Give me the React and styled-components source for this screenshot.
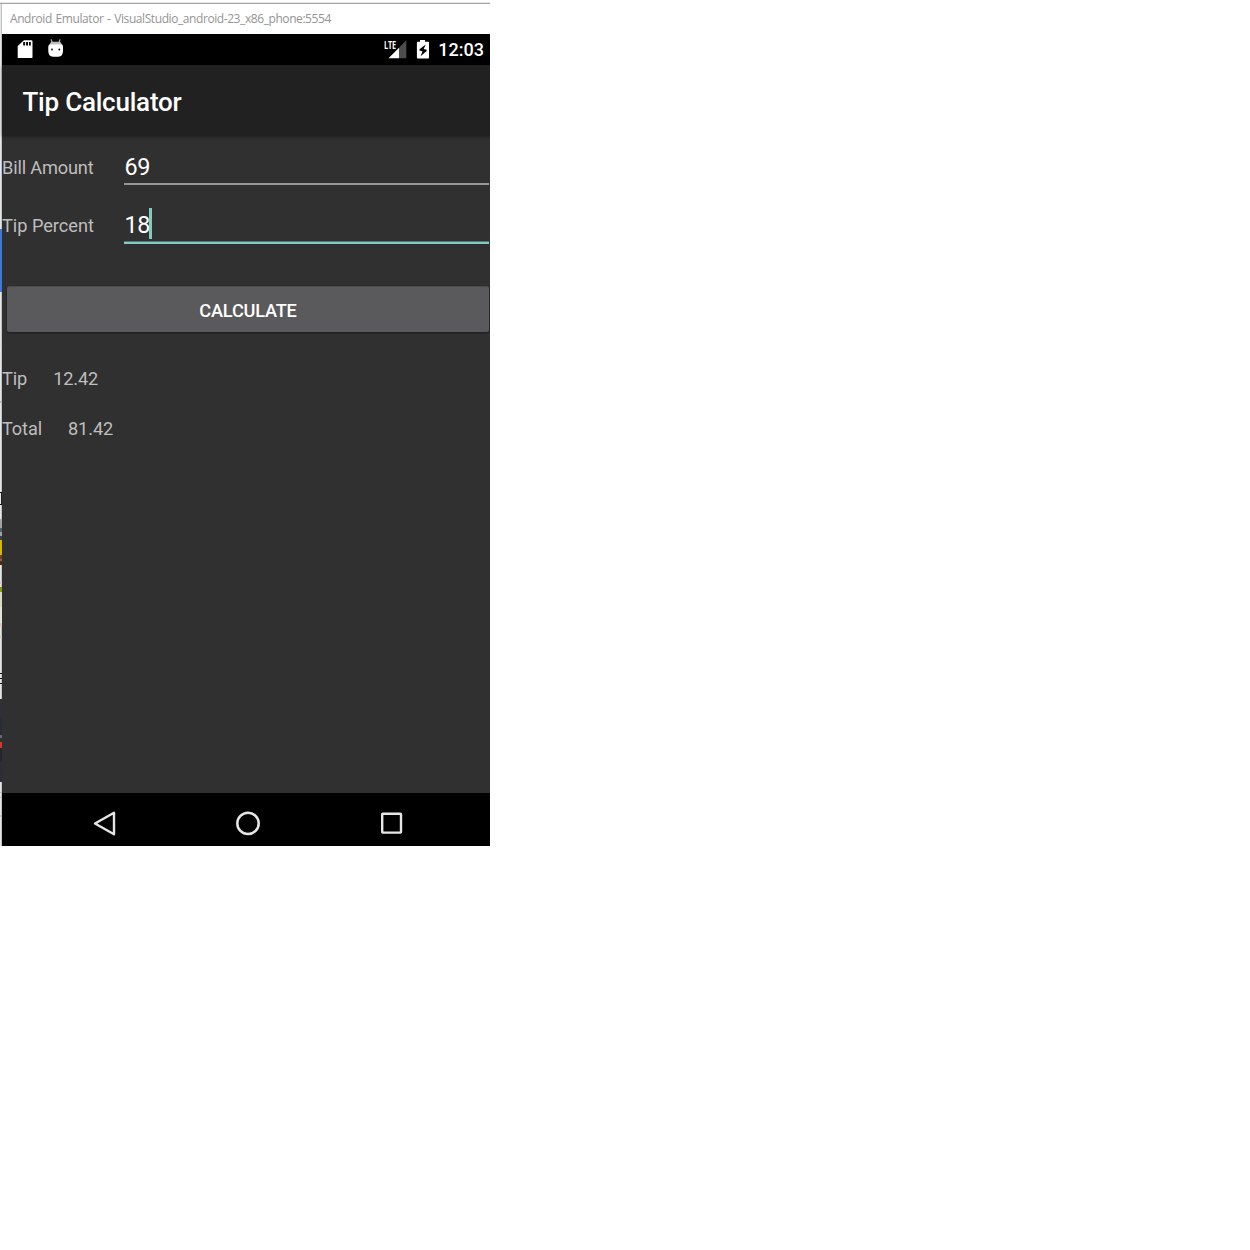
import React from "react";
import styled, { createGlobalStyle } from "styled-components";

const GlobalStyle = createGlobalStyle`
  * { box-sizing: border-box; }
  body { margin: 0; background: #fff; font-family: Roboto, sans-serif; }
`;

const Desktop = styled.div`
  display: flex;
  flex-direction: column;
  width: 490px;
  height: 846px;
  overflow: hidden;
`;

const DesktopTop = styled.div`
  flex: none;
  height: 4px;
  background: linear-gradient(#fff 0 2px, #e4e4e4 2px 3px, #a5a5a5 3px 4px);
`;

const Columns = styled.div`
  display: flex;
  flex: 1;
`;

const DesktopEdge = styled.div`
  display: flex;
  flex-direction: column;
  flex: none;
  width: 2px;
  border-right: 1px solid rgba(160, 160, 160, 0.55);
  background: #e6e8e7;
`;

const EdgeBand = styled.div`
  flex: none;
  width: 2px;
  height: ${(p) => p.$size}px;
  background: ${(p) => p.$color || "transparent"};
`;

const Emulator = styled.div`
  display: flex;
  flex-direction: column;
  width: 488px;
`;

const TitleBar = styled.div`
  display: flex;
  align-items: center;
  height: 30px;
  padding-left: 8px;
  background: #fff;
  color: #949494;
  font: 12px/30px "Open Sans", "Noto Sans", sans-serif;
  letter-spacing: -0.42px;
  word-spacing: 1px;
  white-space: nowrap;
`;

const StatusBar = styled.div`
  display: flex;
  justify-content: space-between;
  height: 31px;
  padding: 0 6px 0 14px;
  background: #000;
`;

const StatusGroup = styled.div`
  display: flex;
  align-items: flex-start;
`;

const Clock = styled.span`
  margin-left: 8px;
  color: #fff;
  font-size: 18px;
  font-weight: 500;
  line-height: 32px;
`;

const AppBar = styled.header`
  display: flex;
  position: relative;
  height: 71px;
  padding: 2px 0 0 20.5px;
  background: #212121;
  box-shadow: 0 1px 3px rgba(0, 0, 0, 0.35);
`;

const AppTitle = styled.h1`
  margin: 0;
  color: #fff;
  font-size: 26px;
  font-weight: 500;
  line-height: 71px;
  letter-spacing: -0.22px;
`;

const Content = styled.main`
  display: flex;
  flex-direction: column;
  height: 657px;
  background: #303030;
  color: #bebebe;
  font-size: 18.2px;
  letter-spacing: -0.08px;
`;

const FieldRow = styled.label`
  display: flex;
  height: ${(p) => p.$height}px;
  padding-top: ${(p) => p.$top}px;
`;

const FieldLabel = styled.span`
  width: 122px;
  line-height: 38px;
  letter-spacing: ${(p) => p.$tracking}px;
`;

const Field = styled.span`
  display: flex;
  align-items: flex-start;
  width: 365px;
  height: ${(p) => (p.$focused ? 37 : 36)}px;
  border-bottom: 2px solid ${(p) => (p.$focused ? "#80cbc4" : "#989698")};
  box-shadow: ${(p) => (p.$focused ? "inset 0 -1px #557370" : "none")};
  color: #fff;
  font-size: 23.4px;
  line-height: 37px;
  letter-spacing: -0.2px;
  text-indent: 0.4px;
`;

const Caret = styled.span`
  width: 3px;
  height: 31px;
  margin: 1px 0 0 -1.3px;
  background: #80cbc4;
`;

const CalculateButton = styled.button`
  width: 482px;
  height: 46px;
  margin: 32px 0 0 5px;
  padding: 3px 0 0;
  border: 0;
  border-top: 1px solid #4a494b;
  border-radius: 2px;
  background: #5a595b;
  box-shadow: 0 1px 2px rgba(0, 0, 0, 0.45);
  color: #fff;
  font: 500 18.2px/42px Roboto, sans-serif;
  letter-spacing: -0.22px;
`;

const ResultRow = styled.div`
  display: flex;
  gap: 26px;
  height: 50px;
  line-height: 50px;
  letter-spacing: -0.12px;
`;

const Results = styled.section`
  padding-top: 22px;
`;

const NavBar = styled.nav`
  display: flex;
  justify-content: space-between;
  height: 53px;
  padding: 14px 82px 0 87px;
  background: #000;
`;

const Icon = styled.svg`
  display: block;
  flex: none;
  margin-left: ${(p) => p.$shift || 0}px;
`;

const edge = [
  [225, null], [63, "#3d78dc"], [53, null], [1, "#d0d0d0"], [55, null], [2, "#b5b5b5"],
  [89, null], [1, "#111"], [11, "glyph"], [1, "#111"], [14, null], [2, "#b5a398"],
  [7, "#a0a4a8"], [4, "#536370"], [4, "#a1a3a3"], [4, "#36424b"], [15, "#d9b600"],
  [4, "#704321"], [2, "#9a622e"], [4, "#4d2b19"], [16, null], [3, "#e3c4d0"],
  [3, null], [5, "#829b13"], [15, "#d7dacd"], [16, "#e1e3dc"], [4, "#e3c9bc"],
  [8, null], [3, "#d1d1c9"], [35, null], [1, "#111"], [4, null], [1, "#111"],
  [4, null], [1, "#111"], [15, null], [18, "#302f36"], [18, "#292b35"],
  [3, "#696970"], [4, "#303038"], [6, "#d9342f"], [14, "#25262a"], [20, "#2e2d35"],
  [10, null], [1, "#bdbdbd"], [4, null], [1, "#bdbdbd"], [17, null], [2, "#c2c2c2"],
].map(([size, color]) => [
  size,
  color === "glyph" ? "linear-gradient(90deg, #e6e8e7 50%, #222 50%)" : color,
]);

const fields = [
  { label: "Bill Amount", value: "69", height: 59, top: 13, tracking: -0.17 },
  { label: "Tip Percent", value: "18", height: 59, top: 12, tracking: -0.03, focused: true },
];

const results = [
  { label: "Tip", value: "12.42" },
  { label: "Total", value: "81.42" },
];

const SdCard = () => (
  <Icon width="18" height="24" viewBox="0 0 18 24">
    <path d="M8 6.3h7.2a1.3 1.3 0 0 1 1.3 1.3v15.5a1.3 1.3 0 0 1-1.3 1.3H3a1.3 1.3 0 0 1-1.3-1.3V12z" fill="#fff" />
    <path d="M7.2 8h1.9v3.5H7.2zM10.1 8H12v3.5h-1.9zM13 8h1.8v3.5H13z" fill="#000" />
  </Icon>
);

const Robot = () => (
  <Icon width="18" height="24" viewBox="0 0 18 24" $shift={13}>
    <path d="M4.2 5.3l1 3.6M13 5.3l-1 3.6" stroke="#aaa" strokeWidth="1.3" />
    <path d="M4.2 7.8h9l2 3H2.2z" fill="#bcbcbc" />
    <path d="M1.3 12.4Q1.5 10.2 3.5 10.2h10.4q2 0 2.1 2.2v4.4q0 5.9-4.6 5.9H6q-4.7 0-4.7-5.9z" fill="#fff" />
    <circle cx="5" cy="15.5" r=".9" fill="#000" />
    <circle cx="12.3" cy="15.5" r=".9" fill="#000" />
  </Icon>
);

const LteLabel = styled.span`
  width: 14px;
  height: 12px;
  margin: 5px -3px 0 0;
  color: #fff;
  font: bold 10.5px/12px "Open Sans", sans-serif;
  letter-spacing: -0.2px;
  transform: scaleX(0.69);
  transform-origin: left;
`;

const Signal = () => (
  <Icon width="19" height="25" viewBox="0 0 19 25" $shift={-7.5}>
    <path d="M11 13.8L18.3 6.3v18H11z" fill="#4d4d4d" />
    <path d="M0.5 24.3L11 13.8v10.5z" fill="#fff" />
  </Icon>
);

const Battery = () => (
  <Icon width="14" height="26" viewBox="0 0 14 26" $shift={9.5}>
    <path d="M4 6h5v1.7h3.2q.8 0 .8.9v15q0 .9-.9.9H1.8q-.9 0-.9-.9v-15q0-.9.9-.9H4z" fill="#fff" />
    <path d="M9.7 10.4L3.5 15.2v1.3l3 .9-2 4.9 6.2-5.4v-1.2l-3-.7z" fill="#000" />
  </Icon>
);

export default function App() {
  return (
    <>
      <GlobalStyle />
      <Desktop>
        <DesktopTop />
        <Columns>
          <DesktopEdge>
            {edge.map(([size, color], i) => (
              <EdgeBand key={i} $size={size} $color={color} />
            ))}
          </DesktopEdge>
          <Emulator>
            <TitleBar>Android Emulator - VisualStudio_android-23_x86_phone:5554</TitleBar>
            <StatusBar>
              <StatusGroup>
                <SdCard />
                <Robot />
              </StatusGroup>
              <StatusGroup>
                <LteLabel>LTE</LteLabel>
                <Signal />
                <Battery />
                <Clock>12:03</Clock>
              </StatusGroup>
            </StatusBar>
            <AppBar>
              <AppTitle>Tip Calculator</AppTitle>
            </AppBar>
            <Content>
              {fields.map((f) => (
                <FieldRow key={f.label} $height={f.height} $top={f.top}>
                  <FieldLabel $tracking={f.tracking}>{f.label}</FieldLabel>
                  <Field $focused={f.focused}>
                    {f.value}
                    {f.focused && <Caret />}
                  </Field>
                </FieldRow>
              ))}
              <CalculateButton>CALCULATE</CalculateButton>
              <Results>
                {results.map((r) => (
                  <ResultRow key={r.label}>
                    <span>{r.label}</span>
                    <span>{r.value}</span>
                  </ResultRow>
                ))}
              </Results>
            </Content>
            <NavBar>
              <Icon width="32" height="32" viewBox="0 0 32 32">
                <path d="M25 5.8v21.5L6 16.5z" fill="none" stroke="#e6e6e6" strokeWidth="2.4" strokeLinejoin="round" />
              </Icon>
              <Icon width="32" height="32" viewBox="0 0 32 32">
                <circle cx="15" cy="16.4" r="10.7" fill="none" stroke="#e6e6e6" strokeWidth="2.5" />
              </Icon>
              <Icon width="32" height="32" viewBox="0 0 32 32">
                <rect x="6.2" y="6.8" width="18.8" height="18.8" rx=".5" fill="none" stroke="#e6e6e6" strokeWidth="2.4" />
              </Icon>
            </NavBar>
          </Emulator>
        </Columns>
      </Desktop>
    </>
  );
}
